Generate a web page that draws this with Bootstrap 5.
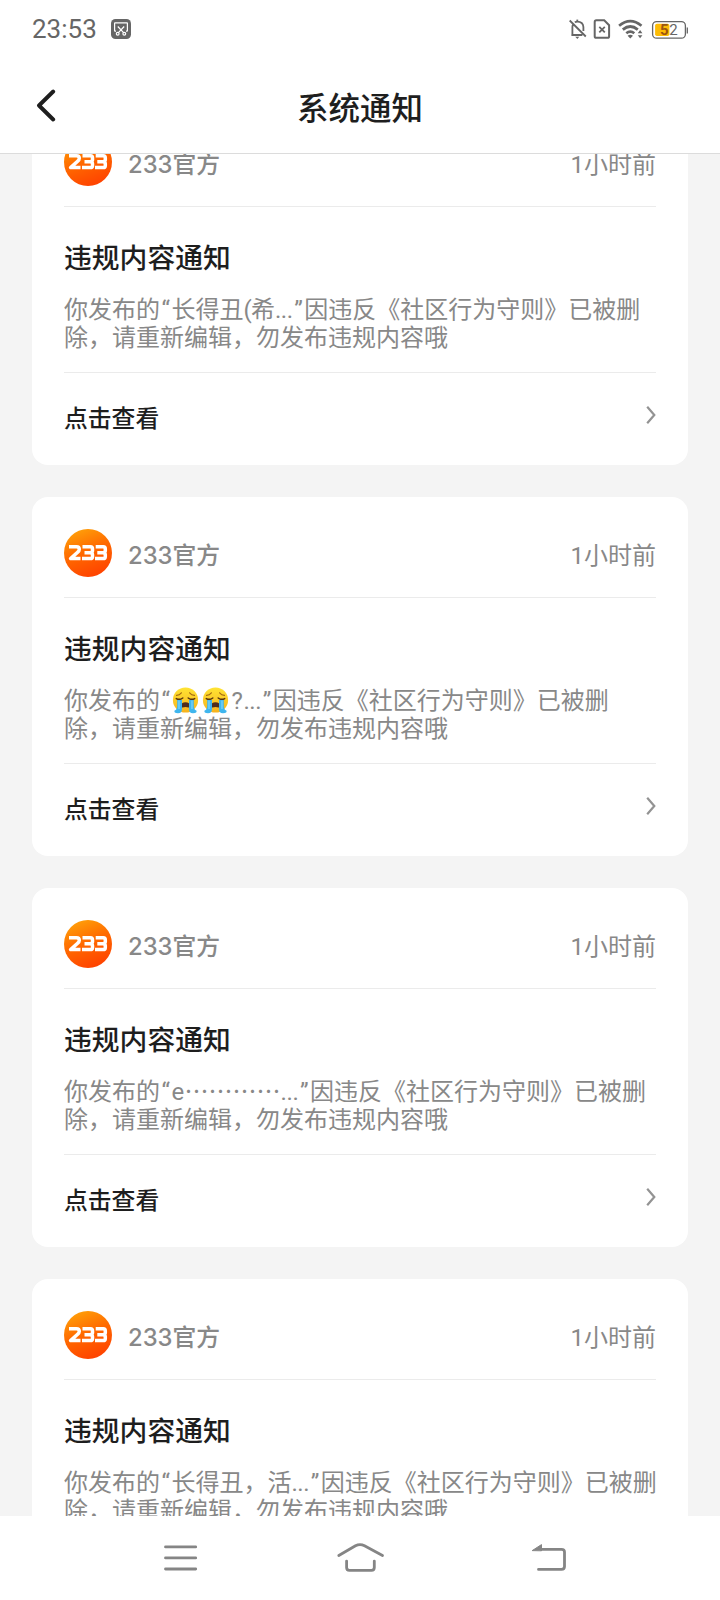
<!DOCTYPE html>
<html lang="zh-CN">
<head>
<meta charset="utf-8">
<meta name="viewport" content="width=device-width, initial-scale=1">
<title>系统通知</title>
<link href="https://cdn.jsdelivr.net/npm/bootstrap@5.3.0/dist/css/bootstrap.min.css" rel="stylesheet">
<style>
  body { font-family: Roboto, "Noto Sans CJK SC", sans-serif; color: #1e1e1e; background: #fff; }
  .screen { height: 1600px; }
  .statusbar { height: 58px; padding: 0 32px 0 32px; color: #666; }
  .clock { font-size: 26px; line-height: 60px; }
  .clip { margin-left: 14px; }
  .topbar { height: 96px; border-bottom: 1px solid #dcdcdc; }
  .topbar h1 { font-family: "Noto Sans CJK SC", sans-serif; font-size: 31.5px; font-weight: 500; line-height: 96px; }
  .back { position: absolute; left: 36px; top: 30px; }
  .feed { background: #f4f4f4; padding: 0 32px; }
  .feed-list { margin-top: -48px; gap: 32px; }
  .notice { height: 359px; border: 0; border-radius: 16px; padding: 0 32px; flex: none; }
  .notice-head { height: 101px; padding-top: 18px; border-bottom: 1px solid #ebebeb; color: #888; font-size: 24px; }
  .avatar { margin-top: -6px; }
  .sender { font-family: Inter, "Noto Sans CJK SC", sans-serif; font-weight: 500; font-size: 23.8px; margin-left: 16px; }
  .ago { font-size: 24px; }
  .notice-body { height: 166px; border-bottom: 1px solid #ebebeb; }
  .notice-body h2 { font-family: "Noto Sans CJK SC", sans-serif; font-size: 27.8px; font-weight: 500; line-height: 40px; margin: 29px 0 0; }
  .notice-body p { font-family: "Noto Sans CJK SC", sans-serif; font-size: 24px; line-height: 28px; color: #888; margin: 18px 0 0; white-space: nowrap; }
  .notice-body p span { display: inline-block; line-height: 20px; font-family: Roboto, sans-serif; }
  .quo { width: 11.4px; text-align: center; }
  .dots { width: 18px; letter-spacing: -.4px; }
  .emo { vertical-align: -1px; margin: -4px 1.5px; position: relative; left: -1px; }
  .notice-foot { height: 90px; padding-bottom: 3px; font-family: "Noto Sans CJK SC", sans-serif; font-size: 23.8px; font-weight: 500; }
  .chev { margin-bottom: 3px; }
  .navkeys { height: 84px; }
</style>
</head>
<body>
<svg width="0" height="0" class="position-absolute" aria-hidden="true">
  <defs>
    <linearGradient id="sun" x1=".15" y1="0" x2=".55" y2="1"><stop offset="0" stop-color="#ffa50a"/><stop offset=".5" stop-color="#ff6a00"/><stop offset="1" stop-color="#ff4400"/></linearGradient>
    <linearGradient id="skin" x1="0" y1="0" x2="0" y2="1"><stop offset="0" stop-color="#ffe433"/><stop offset="1" stop-color="#f7b21d"/></linearGradient>
    <symbol id="logo" viewBox="0 0 48 48">
      <circle cx="24" cy="24" r="24" fill="url(#sun)"/>
      <g fill="none" stroke="#fff" stroke-width="3.5" stroke-linejoin="round">
        <path d="M5 17.8H12.5Q15.3 17.8 15.3 20.3Q15.3 22 13.6 23.2L6.6 29.6H16.5"/>
        <path d="M18.5 17.8H26.5Q28.5 17.8 28.5 20V21.8Q28.5 23.7 26 23.7H20.5M26 23.7Q28.5 23.7 28.5 25.8V27.4Q28.5 29.6 26.3 29.6H18"/>
        <path d="M31.7 17.8H39.3Q41.3 17.8 41.3 20V21.8Q41.3 23.7 38.8 23.7H33.3M38.8 23.7Q41.3 23.7 41.3 25.8V27.4Q41.3 29.6 39.1 29.6H31"/>
      </g>
    </symbol>
    <symbol id="cry" viewBox="0 0 27 27">
      <circle cx="13.5" cy="13" r="12.6" fill="url(#skin)"/>
      <path d="M4.5 8.4Q7.5 8.2 9.4 5.8M17.6 5.8Q19.5 8.2 22.5 8.4" fill="none" stroke="#a46a12" stroke-width="1.1" stroke-linecap="round"/>
      <path d="M4.3 11.6Q7.5 13.4 10.8 11M16.2 11Q19.5 13.4 22.7 11.6" fill="none" stroke="#54330f" stroke-width="1.5" stroke-linecap="round"/>
      <path d="M9 19.5Q9 15.2 13.5 15.2T18 19.5Q18 21 16.5 20.4Q13.5 19.4 10.5 20.4Q9 21 9 19.5Z" fill="#4e2c1c"/>
      <path d="M5.2 13H10V22Q10 26.3 6 26.3Q1.5 26.3 2.6 23.6Q5.2 22.5 5.2 19ZM21.8 13H17V22Q17 26.3 21 26.3Q25.5 26.3 24.4 23.6Q21.8 22.5 21.8 19Z" fill="#3fb6ee"/>
      <path d="M7 13.5V22M20 13.5V22" stroke="#7ad5fb" stroke-width="1.3"/>
    </symbol>
    <symbol id="more" viewBox="0 0 10 20"><path d="M1.2 1.8L8.3 10L1.2 18.2" fill="none" stroke="#939393" stroke-width="2.2"/></symbol>
  </defs>
</svg>

<div class="screen d-flex flex-column overflow-hidden">
  <div class="statusbar d-flex align-items-center flex-shrink-0">
    <span class="clock">23:53</span>
    <svg class="clip" width="20" height="20" viewBox="0 0 20 20" fill="none" stroke="#fff" stroke-width="1.2">
      <rect width="20" height="20" rx="4.5" fill="#666" stroke="none"/>
      <path d="M5 12.2H4Q3.6 12.2 3.6 11.8V4.2Q3.6 3.8 4 3.8H16Q16.4 3.8 16.4 4.2V11.8Q16.4 12.2 16 12.2H15M6.8 7.5L12.6 13.6M13.2 7.5L7.4 13.6"/>
      <circle cx="6.7" cy="14.7" r="1.4"/><circle cx="13.3" cy="14.7" r="1.4"/>
    </svg>
    <svg class="ms-auto" width="120" height="24" viewBox="0 0 120 24" fill="none" stroke="#666" stroke-width="1.8">
      <path d="M1.7 3.5L17.8 19.5M3.4 18H14.4M4.4 17.6V10Q4.4 8.8 5 7.7M6.8 5.3Q8 4.6 9.3 4.6Q15 4.6 15.4 10V14"/>
      <path d="M9.3 2.6V5"/><path d="M7.3 19.8H11.3L9.3 22Z" fill="#666" stroke="none"/>
      <path d="M28.3 3.3H36.2L41.1 8.2V19.2Q41.1 20.8 39.5 20.8H28.3Q26.7 20.8 26.7 19.2V4.9Q26.7 3.3 28.3 3.3Z" stroke-width="2"/>
      <path d="M31.3 9.8L36.8 15.3M36.8 9.8L31.3 15.3"/>
      <path d="M51.1 8.8Q62.3 -.4 73.5 8.8M54.8 12.6Q62.3 6.4 69.8 12.6M58.3 16.3Q62.3 13 66.3 16.3" stroke-width="2.7"/>
      <path d="M59.6 18.7Q62.3 16.6 65 18.7L62.3 21.6ZM69.8 16.2L72.1 13.1L74.4 16.2ZM69.8 18.2H74.4L72.1 21.3Z" fill="#666" stroke="none"/>
      <rect x="84.6" y="4.6" width="32.8" height="16.6" rx="4" stroke-width="1.3"/>
      <path d="M119.3 10.6V16.6" stroke-width="1.3"/>
      <rect x="87.1" y="6.8" width="14.3" height="12.2" rx="1.8" fill="#fdbc05" stroke="none"/>
      <text x="92.1" y="18.4" font-family="Roboto" font-size="15" font-weight="700" fill="#9b5410" stroke="none">5</text>
      <text x="101.2" y="18.4" font-family="Roboto" font-size="15" fill="#666" stroke="none">2</text>
    </svg>
  </div>

  <header class="topbar position-relative flex-shrink-0 text-center">
    <svg class="back" width="20" height="34" viewBox="0 0 20 34"><path d="M17.2 3.5L3 17.5L17.2 31.5" fill="none" stroke="#1e1e1e" stroke-width="3.9" stroke-linecap="round" stroke-linejoin="round"/></svg>
    <h1 class="m-0">系统通知</h1>
  </header>

  <main class="feed flex-grow-1 overflow-hidden">
    <div class="feed-list d-flex flex-column">
      <article class="notice card">
        <div class="notice-head d-flex align-items-center"><svg class="avatar" width="48" height="48"><use href="#logo"/></svg><span class="sender">233官方</span><span class="ago ms-auto">1小时前</span></div>
        <div class="notice-body"><h2>违规内容通知</h2><p>你发布的<span class="quo">“</span>长得丑<span style="width:7.5px">(</span>希<span class="dots">...</span><span class="quo">”</span>因违反《社区行为守则》已被删<br>除，请重新编辑，勿发布违规内容哦</p></div>
        <div class="notice-foot d-flex align-items-center justify-content-between"><span>点击查看</span><svg class="chev" width="10" height="20"><use href="#more"/></svg></div>
      </article>
      <article class="notice card">
        <div class="notice-head d-flex align-items-center"><svg class="avatar" width="48" height="48"><use href="#logo"/></svg><span class="sender">233官方</span><span class="ago ms-auto">1小时前</span></div>
        <div class="notice-body"><h2>违规内容通知</h2><p>你发布的<span class="quo">“</span><svg class="emo" width="27" height="27"><use href="#cry"/></svg><svg class="emo" width="27" height="27"><use href="#cry"/></svg><span style="width:12px">?</span><span class="dots">...</span><span class="quo">”</span>因违反《社区行为守则》已被删<br>除，请重新编辑，勿发布违规内容哦</p></div>
        <div class="notice-foot d-flex align-items-center justify-content-between"><span>点击查看</span><svg class="chev" width="10" height="20"><use href="#more"/></svg></div>
      </article>
      <article class="notice card">
        <div class="notice-head d-flex align-items-center"><svg class="avatar" width="48" height="48"><use href="#logo"/></svg><span class="sender">233官方</span><span class="ago ms-auto">1小时前</span></div>
        <div class="notice-body"><h2>违规内容通知</h2><p>你发布的<span class="quo">“</span><span style="width:13.2px">e</span>…………<span class="dots">...</span><span class="quo">”</span>因违反《社区行为守则》已被删<br>除，请重新编辑，勿发布违规内容哦</p></div>
        <div class="notice-foot d-flex align-items-center justify-content-between"><span>点击查看</span><svg class="chev" width="10" height="20"><use href="#more"/></svg></div>
      </article>
      <article class="notice card">
        <div class="notice-head d-flex align-items-center"><svg class="avatar" width="48" height="48"><use href="#logo"/></svg><span class="sender">233官方</span><span class="ago ms-auto">1小时前</span></div>
        <div class="notice-body"><h2>违规内容通知</h2><p>你发布的<span class="quo">“</span>长得丑，活<span class="dots">...</span><span class="quo">”</span>因违反《社区行为守则》已被删<br>除，请重新编辑，勿发布违规内容哦</p></div>
        <div class="notice-foot d-flex align-items-center justify-content-between"><span>点击查看</span><svg class="chev" width="10" height="20"><use href="#more"/></svg></div>
      </article>
    </div>
  </main>

  <nav class="navkeys d-flex justify-content-center align-items-center flex-shrink-0 bg-white">
    <svg width="440" height="36" viewBox="140 1538.4 440 36" fill="none" stroke="#858585" stroke-width="2.8" stroke-linecap="round" stroke-linejoin="round">
      <path d="M165.5 1545.3H195.7M165.5 1556.3H195.7M165.5 1567.4H195.7"/>
      <path d="M338.8 1553.9L355.5 1544.2Q360 1541.8 364.5 1544.2L382.5 1553.9M346.6 1559.5V1565.9Q346.6 1568.7 349.4 1568.7H371.5Q374.3 1568.7 374.3 1565.9V1559.5"/>
      <path d="M541 1547.7H561.5Q564.5 1547.7 564.5 1550.5V1565Q564.5 1567.8 561.5 1567.8H538.5"/>
      <path d="M532.5 1548.8L541.5 1543V1548.8Z" fill="#858585" stroke-width="1"/>
    </svg>
  </nav>
</div>
<script src="https://cdn.jsdelivr.net/npm/bootstrap@5.3.0/dist/js/bootstrap.bundle.min.js"></script>
</body>
</html>
